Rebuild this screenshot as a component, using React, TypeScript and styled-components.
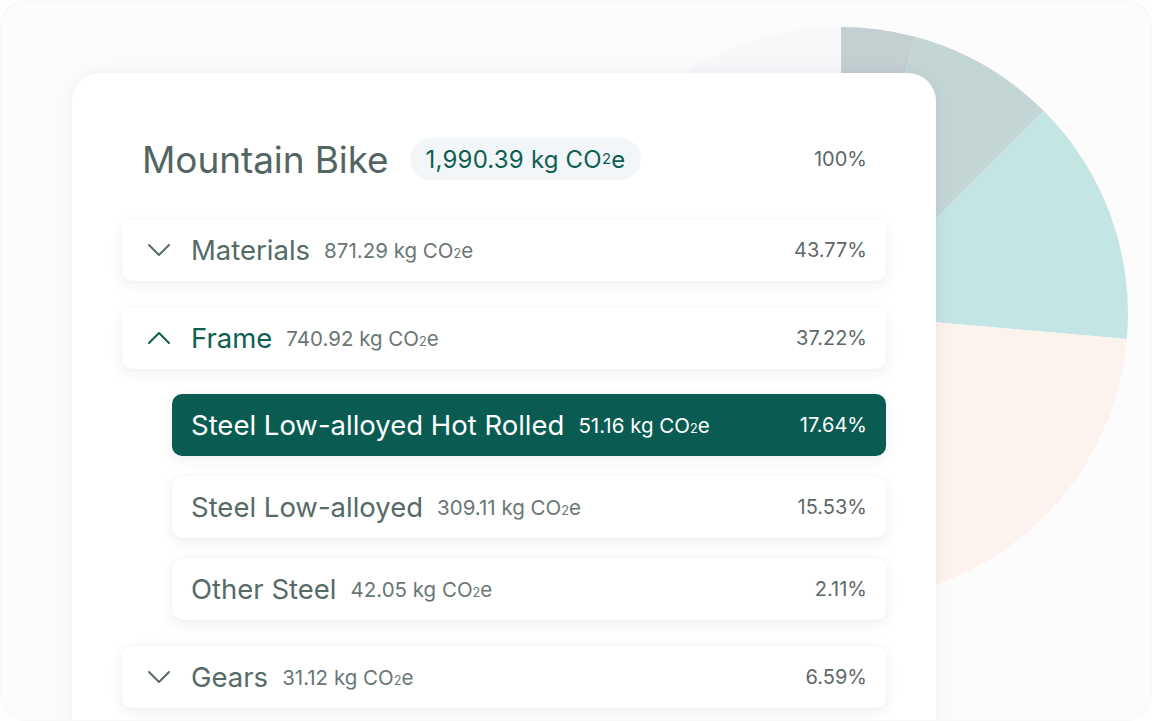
import React from "react";
import styled, { createGlobalStyle } from "styled-components";

const GlobalStyle = createGlobalStyle`
  html, body {
    margin: 0;
    padding: 0;
    background: #ffffff;
  }
  body {
    font-family: Inter, "Noto Sans", sans-serif;
    -webkit-font-smoothing: antialiased;
  }
`;

type Slice = { from: number; to: number; color: string };

const slices: Slice[] = [
  { from: 0, to: 15, color: "#c3cfd1" },
  { from: 15, to: 45, color: "#c3d6d5" },
  { from: 45, to: 95, color: "#c3e6e4" },
  { from: 95, to: 200, color: "#fcf3ee" },
  { from: 200, to: 360, color: "#f8f7fa" },
];

const R = 287;

const point = (deg: number) => {
  const a = (deg * Math.PI) / 180;
  return `${R + R * Math.sin(a)} ${R - R * Math.cos(a)}`;
};

const slicePath = ({ from, to }: Slice) =>
  `M ${R} ${R} L ${point(from)} A ${R} ${R} 0 ${to - from > 180 ? 1 : 0} 1 ${point(to)} Z`;

const Pie: React.FC = () => (
  <PieSvg width={R * 2} height={R * 2} viewBox={`0 0 ${R * 2} ${R * 2}`}>
    {slices.map((s) => (
      <path key={s.from} d={slicePath(s)} fill={s.color} />
    ))}
  </PieSvg>
);

const Chevron: React.FC<{ up?: boolean; color: string }> = ({ up, color }) => (
  <ChevronSvg width="24" height="14" viewBox="0 0 24 14" fill="none">
    <polyline
      points={up ? "2,12 12,2 22,12" : "2,2 12,12 22,2"}
      stroke={color}
      strokeWidth="2"
      strokeLinecap="round"
      strokeLinejoin="round"
    />
  </ChevronSvg>
);

const Co2: React.FC<{ amount: string }> = ({ amount }) => (
  <>
    {amount} kg CO<Sub>2</Sub>e
  </>
);

type RowProps = {
  name: string;
  amount: string;
  pct: string;
  sub?: boolean;
  active?: boolean;
  open?: boolean;
};

const Row: React.FC<RowProps> = ({ name, amount, pct, sub, active, open }) => (
  <RowBox $sub={sub} $active={active}>
    {!sub && <Chevron up={open} color={open ? "#0d5f52" : "#5b6b69"} />}
    <Name $active={active} $open={open}>
      {name}
    </Name>
    <Amount $active={active}>
      <Co2 amount={amount} />
    </Amount>
    <Pct $active={active}>{pct}</Pct>
  </RowBox>
);

export default function App() {
  return (
    <>
      <GlobalStyle />
      <Page>
        <Pie />
        <Card>
          <Header>
            <Title>Mountain Bike</Title>
            <Badge>
              <Co2 amount="1,990.39" />
            </Badge>
            <HeaderPct>100%</HeaderPct>
          </Header>
          <List>
            <Row name="Materials" amount="871.29" pct="43.77%" />
            <Group>
              <Row name="Frame" amount="740.92" pct="37.22%" open />
              <SubList>
                <Row name="Steel Low-alloyed Hot Rolled" amount="51.16" pct="17.64%" sub active />
                <Row name="Steel Low-alloyed" amount="309.11" pct="15.53%" sub />
                <Row name="Other Steel" amount="42.05" pct="2.11%" sub />
              </SubList>
            </Group>
            <Row name="Gears" amount="31.12" pct="6.59%" />
          </List>
        </Card>
      </Page>
    </>
  );
}

const Page = styled.div`
  position: relative;
  box-sizing: border-box;
  width: 1152px;
  height: 721px;
  overflow: hidden;
  background: #fcfcfd;
  border: 1px solid #f7f7f9;
  border-radius: 26px;
  padding: 72px 0 0 71px;
`;

const PieSvg = styled.svg`
  position: absolute;
  left: 553px;
  top: 26px;
`;

const Card = styled.div`
  position: relative;
  z-index: 1;
  box-sizing: border-box;
  width: 864px;
  height: 700px;
  background: #ffffff;
  border-radius: 28px;
  box-shadow: 0 0 22px rgba(40, 40, 70, 0.05), 0 0 3px rgba(40, 40, 70, 0.03);
  padding: 64px 50px 0 50px;
`;

const Header = styled.div`
  display: flex;
  align-items: center;
  height: 44px;
  padding: 0 19px 0 20px;
`;

const Title = styled.div`
  font-size: 37px;
  color: #536562;
  letter-spacing: -0.1px;
  margin-right: 21px;
`;

const Badge = styled.div`
  display: flex;
  align-items: center;
  height: 42px;
  padding: 0 16px;
  border-radius: 21px;
  background: #f2f6f8;
  color: #0d5f52;
  font-size: 24px;
  letter-spacing: 0.2px;
`;

const HeaderPct = styled.div`
  margin-left: auto;
  font-size: 20px;
  color: #5d6968;
`;

const List = styled.div`
  display: flex;
  flex-direction: column;
  gap: 26px;
  margin-top: 38px;
`;

const Group = styled.div`
  display: flex;
  flex-direction: column;
  gap: 25px;
`;

const SubList = styled.div`
  display: flex;
  flex-direction: column;
  gap: 20px;
  margin-left: 50px;
`;

const RowBox = styled.div<{ $sub?: boolean; $active?: boolean }>`
  display: flex;
  align-items: center;
  height: 62px;
  box-sizing: border-box;
  padding: 0 19px 0 ${(p) => (p.$sub ? "19px" : "25px")};
  border-radius: 10px;
  background: ${(p) => (p.$active ? "#0a5c52" : "#ffffff")};
  box-shadow: 0 4px 14px rgba(40, 40, 70, 0.07), 0 0 2px rgba(40, 40, 70, 0.05);
`;

const ChevronSvg = styled.svg`
  flex: none;
  margin-right: 20px;
`;

const Name = styled.span<{ $active?: boolean; $open?: boolean }>`
  font-size: 27.5px;
  letter-spacing: 0;
  color: ${(p) => (p.$active ? "#ffffff" : p.$open ? "#0d5f52" : "#566a67")};
  margin-right: 14px;
  white-space: nowrap;
`;

const Amount = styled.span<{ $active?: boolean }>`
  font-size: 20.5px;
  letter-spacing: 0;
  color: ${(p) => (p.$active ? "#ffffff" : "#6a7675")};
  white-space: nowrap;
`;

const Pct = styled.span<{ $active?: boolean }>`
  margin-left: auto;
  font-size: 20px;
  color: ${(p) => (p.$active ? "#ffffff" : "#5d6968")};
`;

const Sub = styled.span`
  font-size: 0.62em;
`;
